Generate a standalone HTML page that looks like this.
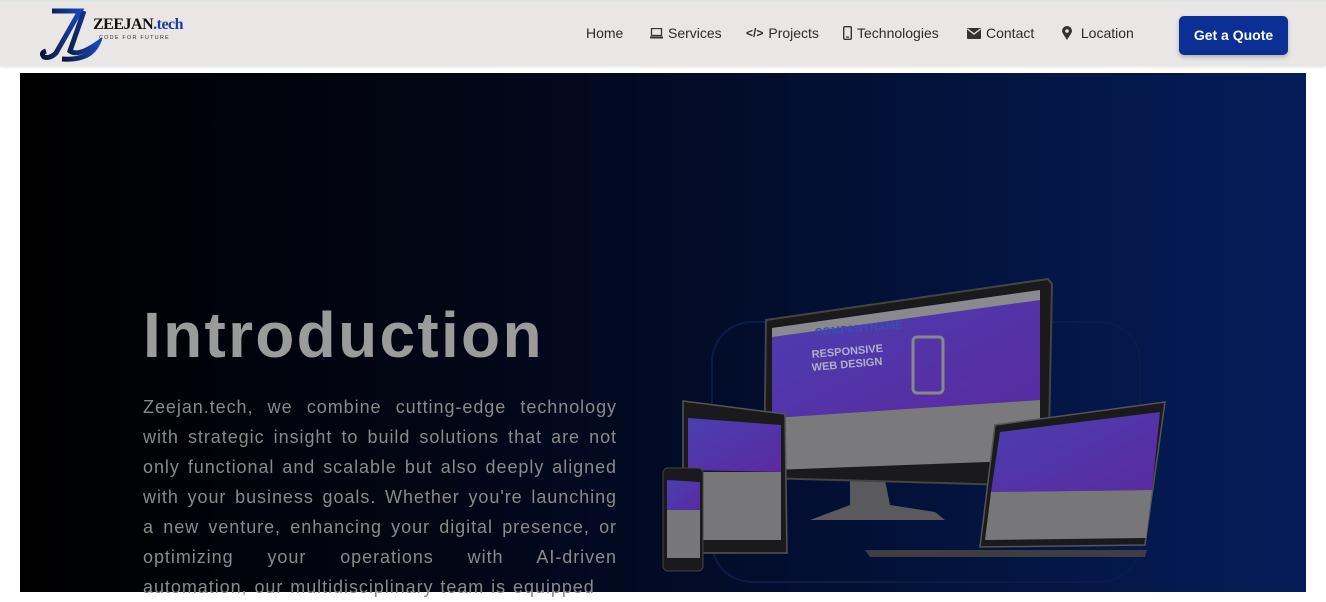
<!DOCTYPE html>
<html><head><meta charset="utf-8"><style>
*{margin:0;padding:0;box-sizing:border-box}
body{width:1326px;height:592px;overflow:hidden;background:#fff;font-family:"Liberation Sans",sans-serif;position:relative}
.hdr{position:absolute;left:0;top:0;width:1326px;height:66px;background:#e9e7e5;border-top:2px solid #dfe5e1;box-shadow:0 1px 3px rgba(0,0,0,.12)}
.nav{position:absolute;top:23px;font-size:14px;color:#2b2b2b;display:flex;align-items:center;gap:5px}
.btn{position:absolute;left:1179px;top:14px;width:109px;height:39px;background:#0b2f94;border-radius:5px;color:#fff;font-weight:bold;font-size:14px;text-align:center;line-height:39px;box-shadow:0 2px 4px rgba(0,0,0,.25)}
.hero{position:absolute;left:20px;top:73px;width:1286px;height:519px;background:linear-gradient(90deg,#000 0%,#020616 35%,#03123a 70%,#041d5a 100%)}
h1{position:absolute;left:143px;top:298px;font-size:64px;color:#9b9b9b;font-weight:bold;letter-spacing:2.3px}
p{position:absolute;left:143px;top:392px;width:474px;font-size:18px;line-height:30px;color:#8a8a8a;text-align:justify;letter-spacing:0.95px;word-spacing:1px}
</style></head><body>
<div class="hdr">
<svg style="position:absolute;left:40px;top:5px" width="62" height="56" viewBox="0 0 62 56">
<defs><linearGradient id="g" x1="0" x2="1"><stop offset="0" stop-color="#0a1530"/><stop offset="1" stop-color="#1a46b8"/></linearGradient></defs>
<path d="M12 4 H40 L16 46 Q10 52 4 50 Q0 46 6 44" fill="none" stroke="url(#g)" stroke-width="5"/>
<path d="M44 4 L30 44 Q38 50 58 36 Q50 54 22 52" fill="none" stroke="url(#g)" stroke-width="5"/>
</svg>
<div style="position:absolute;left:93px;top:14px;font-family:'Liberation Serif',serif;font-weight:bold;font-size:16px;color:#111;letter-spacing:-0.5px">ZEEJAN<span style="color:#1d3f9a">.tech</span></div>
<div style="position:absolute;left:99px;top:33px;font-size:5.5px;color:#333;letter-spacing:1.2px">CODE FOR FUTURE</div>
<div class="nav" style="left:586px">Home</div>
<div class="nav" style="left:650px"><svg width="13" height="11" viewBox="0 0 13 11"><rect x="1.5" y="0.5" width="10" height="7" fill="none" stroke="#333" stroke-width="1.3"/><rect x="0" y="8.5" width="13" height="2" fill="#333"/></svg>Services</div>
<div class="nav" style="left:746px"><b style="font-size:12px">&lt;/&gt;</b>Projects</div>
<div class="nav" style="left:843px"><svg width="9" height="14"><rect x="0.7" y="0.7" width="7.6" height="12.6" rx="1.2" fill="none" stroke="#333" stroke-width="1.4"/><rect x="3" y="10.5" width="3" height="1.2" fill="#333"/></svg>Technologies</div>
<div class="nav" style="left:967px"><svg width="14" height="11"><rect width="14" height="11" rx="1" fill="#333"/><path d="M0.5 1 L7 6 L13.5 1" fill="none" stroke="#e9e7e5" stroke-width="1.3"/></svg>Contact</div>
<div class="nav" style="left:1062px"><svg width="10" height="14" viewBox="0 0 10 14"><path d="M5 14 C2 9 0 7 0 5 A5 5 0 0 1 10 5 C10 7 8 9 5 14Z" fill="#333"/><circle cx="5" cy="5" r="1.8" fill="#e9e7e5"/></svg>&nbsp;Location</div>
<div class="btn">Get a Quote</div>
</div>
<div class="hero"></div>
<h1>Introduction</h1>
<p>Zeejan.tech, we combine cutting-edge technology with strategic insight to build solutions that are not only functional and scalable but also deeply aligned with your business goals. Whether you're launching a new venture, enhancing your digital presence, or optimizing your operations with AI-driven automation, our multidisciplinary team is equipped</p>
<svg style="position:absolute;left:0;top:0" width="1326" height="592">
<defs><linearGradient id="s" x1="0" x2="1" y1="0" y2="1"><stop offset="0" stop-color="#4a3fb0"/><stop offset="1" stop-color="#5a2aa0"/></linearGradient></defs>
<rect x="712" y="322" width="428" height="260" rx="40" fill="none" stroke="#0a1c48" stroke-width="2"/>
<polygon points="810,520 945,520 935,512 890,505 885,480 850,480 850,505" fill="#5a5a5e"/>
<polygon points="766,320 1048,279 1052,284 1048,486 764,478" fill="#1a1a1c" stroke="#444" stroke-width="2"/>
<polygon points="772,328 1040,290 1040,400 772,418" fill="url(#s)"/>
<polygon points="772,328 1040,290 1040,300 772,337" fill="#8a8a8e"/>
<polygon points="772,418 1040,400 1040,460 772,470" fill="#7a7a7c"/>
<text x="815" y="336" font-size="11" font-weight="bold" fill="#3a4fb0" transform="rotate(-5 815 336)">COMPANYNAME</text>
<text x="812" y="358" font-size="11" font-weight="bold" fill="#b0b0c8" transform="rotate(-5 812 358)">RESPONSIVE</text>
<text x="812" y="371" font-size="11" font-weight="bold" fill="#b0b0c8" transform="rotate(-5 812 371)">WEB DESIGN</text>
<rect x="913" y="337" width="30" height="56" rx="4" fill="none" stroke="#888" stroke-width="3"/>
<polygon points="683,401 785,414 787,553 683,553" fill="#1a1a1c" stroke="#555" stroke-width="1.5"/>
<polygon points="688,418 781,425 781,472 688,470" fill="url(#s)"/>
<rect x="688" y="472" width="93" height="68" fill="#77777a"/>
<rect x="663" y="468" width="40" height="103" rx="5" fill="#1a1a1c" stroke="#444"/>
<polygon points="667,480 700,482 700,510 667,510" fill="url(#s)"/>
<rect x="667" y="510" width="33" height="48" fill="#77777a"/>
<polygon points="865,550 1147,550 1145,557 870,557" fill="#3e3e42"/>
<polygon points="995,425 1165,402 1145,545 980,547" fill="#1a1a1c" stroke="#555" stroke-width="1.5"/>
<polygon points="1000,432 1160,412 1152,490 991,492" fill="url(#s)"/>
<polygon points="991,492 1152,490 1146,538 985,540" fill="#77777a"/>
</svg>
</body></html>
